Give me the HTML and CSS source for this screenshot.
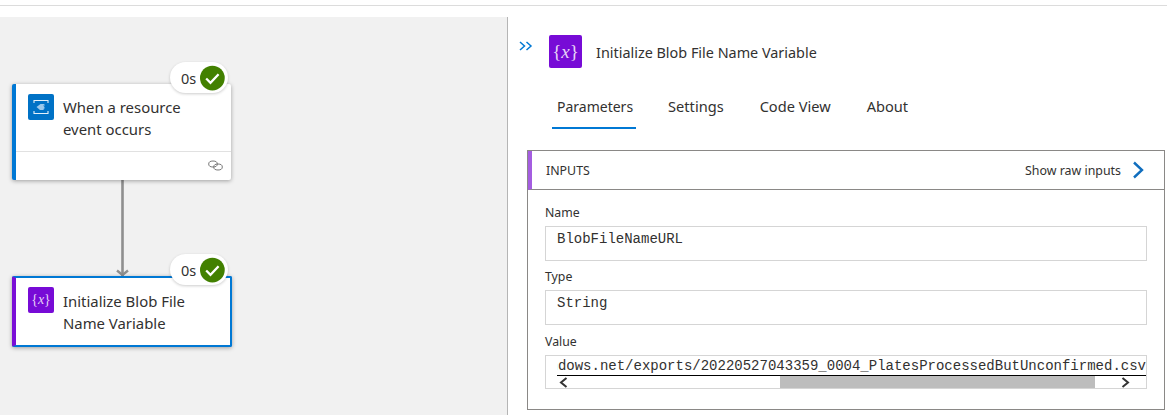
FILE: index.html
```html
<!DOCTYPE html>
<html lang="en">
<head>
  <meta charset="UTF-8">
  <meta name="viewport" content="width=device-width, initial-scale=1.0">
  <title>Run details</title>
  <link rel="stylesheet" href="styles.css">
</head>
<body>
  <div class="topbar"></div>
  <main class="designer">
    <section class="canvas">
      <svg class="connector" width="20" height="100" viewBox="0 0 20 100">
        <path d="M10.500 0V96" stroke="#8f8f8f" stroke-width="2.600" fill="none"/>
        <path d="M5 90.500l5.500 4.500 5.500-4.500" stroke="#8f8f8f" stroke-width="2.400" fill="none"/>
      </svg>

      <div class="node node-trigger">
        <div class="node-body">
          <span class="node-icon icon-blue">
            <svg width="26" height="26" viewBox="0 0 26 26">
              <path d="M6 9V6.500h14V9M6 17v2.500h14V17" stroke="#e4f0fa" stroke-width="1.100" fill="none"/>
              <path d="M8.500 13l4-3h4.500l-2 1.500h2l-1.500 1.500h1.500l-1.500 1.500h1.500l-2 1.500h-3z" fill="#9cc9ec"/>
            </svg>
          </span>
          <span class="node-title">When a resource event occurs</span>
        </div>
        <div class="node-foot">
          <svg width="15" height="11" viewBox="0 0 15 11">
            <ellipse cx="5" cy="4" rx="4.300" ry="3" stroke="#777" fill="none"/>
            <ellipse cx="10" cy="7" rx="4.300" ry="3" stroke="#777" fill="none"/>
          </svg>
        </div>
        <div class="badge">
          <span>0s</span>
          <svg width="26" height="26" viewBox="0 0 26 26">
            <circle cx="13" cy="13" r="13" fill="#428000"/>
            <path d="M6.500 13.500l4.500 4.500 8.500-9" stroke="#fff" stroke-width="2.400" fill="none"/>
          </svg>
        </div>
      </div>

      <div class="node node-selected">
        <div class="node-body">
          <span class="node-icon icon-purple"><i>{</i><em>x</em><i>}</i></span>
          <span class="node-title">Initialize Blob File Name Variable</span>
        </div>
        <div class="badge">
          <span>0s</span>
          <svg width="26" height="26" viewBox="0 0 26 26">
            <circle cx="13" cy="13" r="13" fill="#428000"/>
            <path d="M6.500 13.500l4.500 4.500 8.500-9" stroke="#fff" stroke-width="2.400" fill="none"/>
          </svg>
        </div>
      </div>
    </section>

    <aside class="panel">
      <header class="panel-head">
        <svg class="collapse" width="14" height="10" viewBox="0 0 14 10">
          <path d="M1 1l4.500 4L1 9M7.500 1L12 5 7.500 9" stroke="#0078d4" stroke-width="1.500" fill="none"/>
        </svg>
        <span class="panel-icon"><i>{</i><em>x</em><i>}</i></span>
        <h1>Initialize Blob File Name Variable</h1>
      </header>

      <nav class="tabs">
        <a class="tab active">Parameters</a>
        <a class="tab">Settings</a>
        <a class="tab">Code View</a>
        <a class="tab">About</a>
      </nav>

      <section class="inputs">
        <div class="inputs-head">
          <span class="inputs-name">INPUTS</span>
          <span class="raw">Show raw inputs</span>
          <svg width="12" height="18" viewBox="0 0 12 18">
            <path d="M2 1.500L10 9l-8 7.500" stroke="#106ebe" stroke-width="2.400" fill="none"/>
          </svg>
        </div>
        <div class="inputs-body">
          <label>Name</label>
          <div class="field">BlobFileNameURL</div>
          <label>Type</label>
          <div class="field">String</div>
          <label class="label-value">Value</label>
          <div class="field field-scroll">
            <div class="scroll-text"><span>https://storage.blob.core.windows.net/exports/20220527043359_0004_PlatesProcessedButUnconfirmed.csv</span></div>
            <div class="scrollbar">
              <svg width="9" height="11" viewBox="0 0 9 11"><path d="M7.500 1L2 5.500l5.500 4.500" stroke="#333" stroke-width="2" fill="none"/></svg>
              <div class="track"><div class="thumb"></div></div>
              <svg width="9" height="11" viewBox="0 0 9 11"><path d="M1.500 1L7 5.500 1.500 10" stroke="#333" stroke-width="2" fill="none"/></svg>
            </div>
          </div>
        </div>
      </section>
    </aside>
  </main>
</body>
</html>
```

FILE: styles.css
```css
* {
  box-sizing: border-box;
}
html, body {
  height: 100%;
}
body {
  margin: 0;
  background: #fff;
  color: #323130;
  font-family: "Noto Sans", "Open Sans", sans-serif;
  font-size: 14px;
  overflow: hidden;
}
.topbar {
  height: 17px;
  padding-top: 5px;
  background: #fff;
}
.topbar::before {
  content: "";
  display: block;
  height: 1px;
  background: #dcdcdc;
}
.designer {
  display: grid;
  grid-template-columns: 507px minmax(0, 1fr);
  height: 398px;
}

/* canvas: nodes sit at free positions */
.canvas {
  position: relative;
  background: #f1f1f1;
}
.connector {
  position: absolute;
  left: 112px;
  top: 163px;
}
.node {
  position: absolute;
  left: 12px;
  background: #fff;
  border-radius: 2px;
  box-shadow: 0 1px 4px rgba(0,0,0,0.35);
}
.node-trigger {
  top: 67px;
  width: 219px;
  height: 96px;
  border-left: 4px solid #0078d4;
}
.node-selected {
  top: 259px;
  width: 220px;
  height: 71px;
  border: 2px solid #0078d4;
  border-left: 4px solid #7a0fd6;
}
.node-body {
  display: flex;
  gap: 9px;
  padding: 10px 12px 0 12px;
  height: 67px;
}
.node-selected .node-body {
  padding-top: 9px;
}
.node-title {
  margin-top: 2px;
  line-height: 22px;
  font-size: 14.9px;
  width: 150px;
}
.node-selected .node-title {
  margin-top: 3px;
}
.node-icon {
  flex: none;
  display: flex;
  align-items: center;
  justify-content: center;
  width: 26px;
  height: 26px;
  border-radius: 2px;
  color: #e6d3f7;
  font-family: "Liberation Serif", serif;
  font-size: 14px;
}
.node-icon i, .panel-icon i {
  font-style: normal;
}
.icon-blue {
  background: #0072c6;
}
.icon-purple {
  background: #770bd6;
}
.node-foot {
  display: flex;
  justify-content: flex-end;
  align-items: center;
  height: 28px;
  padding-right: 8px;
  border-top: 1px solid #e1e1e1;
}
.badge {
  position: absolute;
  right: 3px;
  top: -22px;
  display: flex;
  align-items: center;
  gap: 4px;
  width: 58px;
  height: 31px;
  padding: 0 3px 0 11px;
  background: #fff;
  border-radius: 16px;
  box-shadow: 0 1px 3px rgba(0,0,0,0.2);
  font-size: 14.5px;
}
.node-selected .badge {
  right: 2px;
  top: -24px;
}

/* details panel */
.panel {
  min-width: 0;
  border-left: 1px solid #b5b5b5;
  padding: 18px 2px 0 19px;
  background: #fff;
}
.panel-head {
  display: flex;
  align-items: center;
  height: 33px;
}
.collapse {
  flex: none;
  margin: -12px 16px 0 -8px;
}
.panel-icon {
  flex: none;
  display: flex;
  align-items: center;
  justify-content: center;
  width: 33px;
  height: 33px;
  border-radius: 2px;
  background: #770bd6;
  color: #e6d3f7;
  font-family: "Liberation Serif", serif;
  font-size: 19px;
}
.panel-head h1 {
  margin: 2px 0 0 14px;
  font-size: 14.4px;
  font-weight: 400;
}
.tabs {
  display: flex;
  margin: 21px 0 0 25px;
  height: 40px;
}
.tab {
  padding: 7px 4px 0 4px;
  margin-right: 28px;
  line-height: 20px;
  font-size: 14.6px;
}
.tab.active {
  padding: 8px 3px 0 5px;
  font-size: 14px;
  border-bottom: 2px solid #0078d4;
}
.inputs {
  margin-top: 21px;
  height: 260px;
  border: 1px solid #8a8886;
}
.inputs-head {
  display: flex;
  align-items: center;
  height: 39px;
  padding: 0 20px 0 14px;
  border-left: 4px solid #a45de0;
  border-bottom: 1px solid #8a8886;
}
.inputs-name {
  font-size: 12.4px;
}
.raw {
  margin-left: auto;
  margin-right: 11px;
  font-size: 12.4px;
}
.inputs-body {
  padding: 15px 17px 0 17px;
}
.inputs-body label {
  display: block;
  height: 21px;
  line-height: 15px;
  font-size: 12.3px;
}
.inputs-body .label-value {
  margin-top: 9px;
}
.field {
  height: 35px;
  margin-bottom: 8px;
  padding: 3px 0 0 11px;
  border: 1px solid #d5d5d5;
  font-family: "Liberation Mono", monospace;
  font-size: 14px;
  line-height: 18px;
}
.field-scroll {
  height: 34px;
  margin: 0;
  padding: 0;
}
.scroll-text {
  display: flex;
  justify-content: flex-end;
  overflow: hidden;
  height: 20px;
  margin-left: 11px;
  padding-top: 1px;
  border-bottom: 1px solid #000;
  white-space: nowrap;
}
.scroll-text span {
  flex: none;
}
.scrollbar {
  display: flex;
  align-items: center;
  height: 12px;
  padding: 0 16px 0 13px;
}
.track {
  flex: 1;
  height: 12px;
  padding-left: 212px;
  padding-right: 26px;
}
.thumb {
  height: 12px;
  background: #bdbdbd;
}
```
